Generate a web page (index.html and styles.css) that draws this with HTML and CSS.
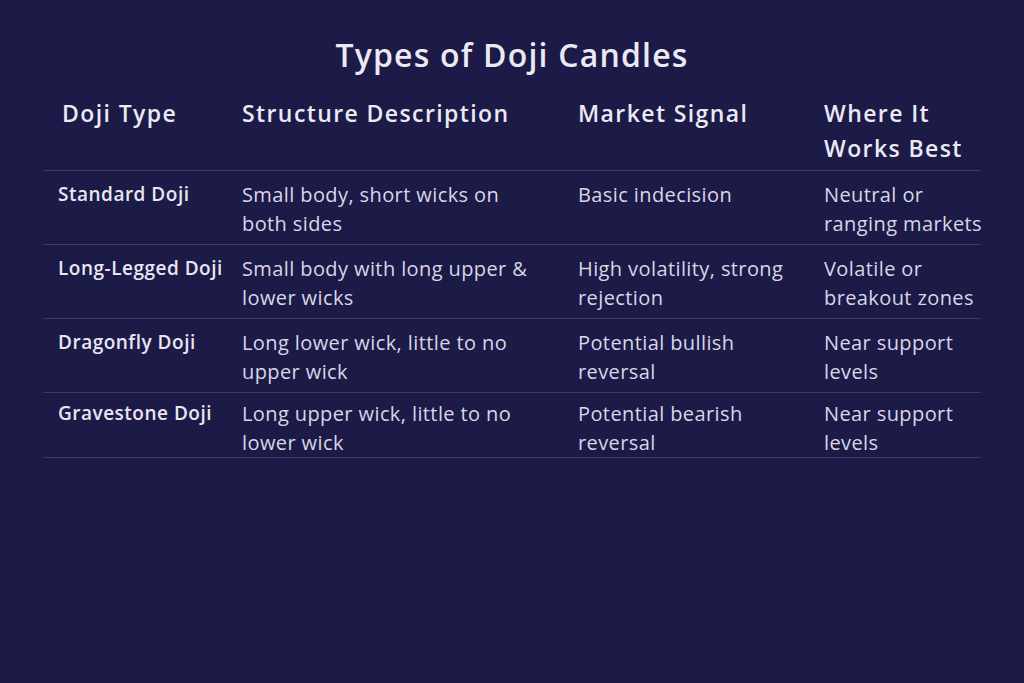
FILE: index.html
```html
<!DOCTYPE html>
<html lang="en">
<head>
    <meta charset="UTF-8">
    <title>Types of Doji Candles</title>
    <link rel="stylesheet" href="styles.css">
</head>
<body>
    <div class="main">
        <h1 class="title">Types of Doji Candles</h1>
        <table class="doji">
            <thead>
            <tr>
                <th class="c1">Doji Type</th>
                <th class="c2">Structure Description</th>
                <th class="c3">Market Signal</th>
                <th class="c4">Where It<br>Works Best</th>
            </tr>
            </thead>
            <tbody>
            <tr>
                <td class="name">Standard Doji</td>
                <td>Small body, short wicks on<br>both sides</td>
                <td>Basic indecision</td>
                <td>Neutral or<br>ranging markets</td>
            </tr>
            <tr>
                <td class="name">Long-Legged Doji</td>
                <td>Small body with long upper &amp;<br>lower wicks</td>
                <td>High volatility, strong<br>rejection</td>
                <td>Volatile or<br>breakout zones</td>
            </tr>
            <tr>
                <td class="name">Dragonfly Doji</td>
                <td>Long lower wick, little to no<br>upper wick</td>
                <td>Potential bullish<br>reversal</td>
                <td>Near support<br>levels</td>
            </tr>
            <tr>
                <td class="name">Gravestone Doji</td>
                <td>Long upper wick, little to no<br>lower wick</td>
                <td>Potential bearish<br>reversal</td>
                <td>Near support<br>levels</td>
            </tr>
            </tbody>
        </table>
    </div>
</body>
</html>
```

FILE: styles.css
```css
* {
    margin: 0;
    padding: 0;
}
html, body {
    height: 100%;
}
body {
    background: #1c1a46;
    color: #d8d6e8;
    font-family: "Open Sans", "Noto Sans", sans-serif;
}
.main {
    width: 938px;
    margin: 0 auto;
    padding-top: 35px;
}
.title {
    font-size: 32px;
    line-height: 40px;
    font-weight: 600;
    letter-spacing: 1.2px;
    text-align: center;
    color: #ebe9f4;
    margin-bottom: 15px;
}
.doji {
    width: 100%;
    table-layout: fixed;
    border-spacing: 0;
    border-collapse: collapse;
}
.doji th,
.doji td {
    text-align: left;
    vertical-align: top;
    white-space: nowrap;
    border-bottom: 1px solid #3b3a6c;
}
.doji th {
    font-size: 23px;
    line-height: 35px;
    font-weight: 600;
    letter-spacing: 1.4px;
    color: #ebe9f4;
    padding: 6px 0 4px;
}
.doji td {
    font-size: 20px;
    line-height: 29px;
    font-weight: 400;
    letter-spacing: 0.4px;
    padding: 9px 0 6px;
}
.doji tr:last-child td {
    padding-top: 6px;
    padding-bottom: 0;
}
.doji td.name {
    font-size: 19px;
    font-weight: 600;
    letter-spacing: 0.5px;
    color: #e8e6f2;
    padding-left: 15px;
}
.doji .c1 {
    width: 180px;
    padding-left: 19px;
}
.doji .c2 {
    width: 336px;
}
.doji .c3 {
    width: 246px;
}
```
